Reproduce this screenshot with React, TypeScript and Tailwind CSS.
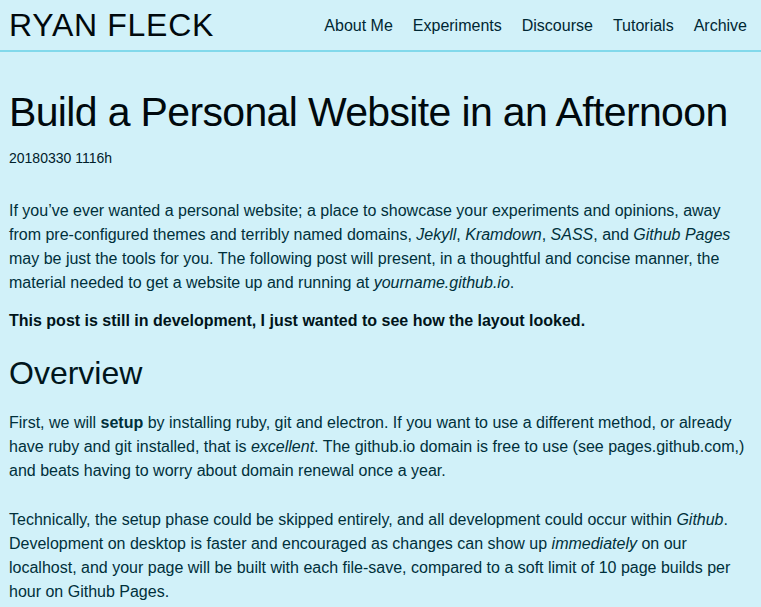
export default function App() {
  const nav = ['About Me', 'Experiments', 'Discourse', 'Tutorials', 'Archive'];

  return (
    <div className="min-h-screen bg-[#d1f1f9] text-[#00303b] font-['Liberation_Sans',Arial,sans-serif]">
      {/* Header */}
      <header className="h-[52px] flex items-center justify-between pl-[9px] pr-[14px] border-b-2 border-[#82d9eb]">
        <div className="text-[32px] leading-none text-[#00090d] tracking-[0.7px]">RYAN FLECK</div>
        <nav className="flex gap-[20px] text-[16px] text-[#002733] mt-[2px]">
          {nav.map((item) => (
            <a key={item} href="#">{item}</a>
          ))}
        </nav>
      </header>

      {/* Post */}
      <main className="px-[9px]">
        <h1 className="text-[41px] leading-[52px] tracking-[-0.65px] text-[#00090d] pt-[34px] whitespace-nowrap">
          Build a Personal Website in an Afternoon
        </h1>
        <p className="text-[14px] leading-[20px] mt-[10px] text-[#00202a]">20180330 1116h</p>

        <p className="text-[16px] leading-[24px] mt-[31px]">
          If you’ve ever wanted a personal website; a place to showcase your experiments and opinions, away
          from pre-configured themes and terribly named domains, <em>Jekyll</em>, <em>Kramdown</em>, <em>SASS</em>, and{' '}
          <em>Github Pages</em> may be just the tools for you. The following post will present, in a thoughtful and
          concise manner, the material needed to get a website up and running at <em>yourname.github.io</em>.
        </p>
        <p className="text-[16px] leading-[24px] mt-[14px] font-bold text-[#00141a]">
          This post is still in development, I just wanted to see how the layout looked.
        </p>

        <h2 className="text-[32px] leading-[40px] mt-[20px] text-[#00161c]">Overview</h2>

        <p className="text-[16px] leading-[24px] mt-[18px]">
          First, we will <strong>setup</strong> by installing ruby, git and electron. If you want to use a different
          method, or already have ruby and git installed, that is <em>excellent</em>. The github.io domain is free to
          use (see pages.github.com,) and beats having to worry about domain renewal once a year.
        </p>
        <p className="text-[16px] leading-[24px] mt-[25px]">
          Technically, the setup phase could be skipped entirely, and all development could occur within{' '}
          <em>Github</em>. Development on desktop is faster and encouraged as changes can show up{' '}
          <em>immediately</em> on our localhost, and your page will be built with each file-save, compared to a soft
          limit of 10 page builds per hour on Github Pages.
        </p>
      </main>
    </div>
  );
}
